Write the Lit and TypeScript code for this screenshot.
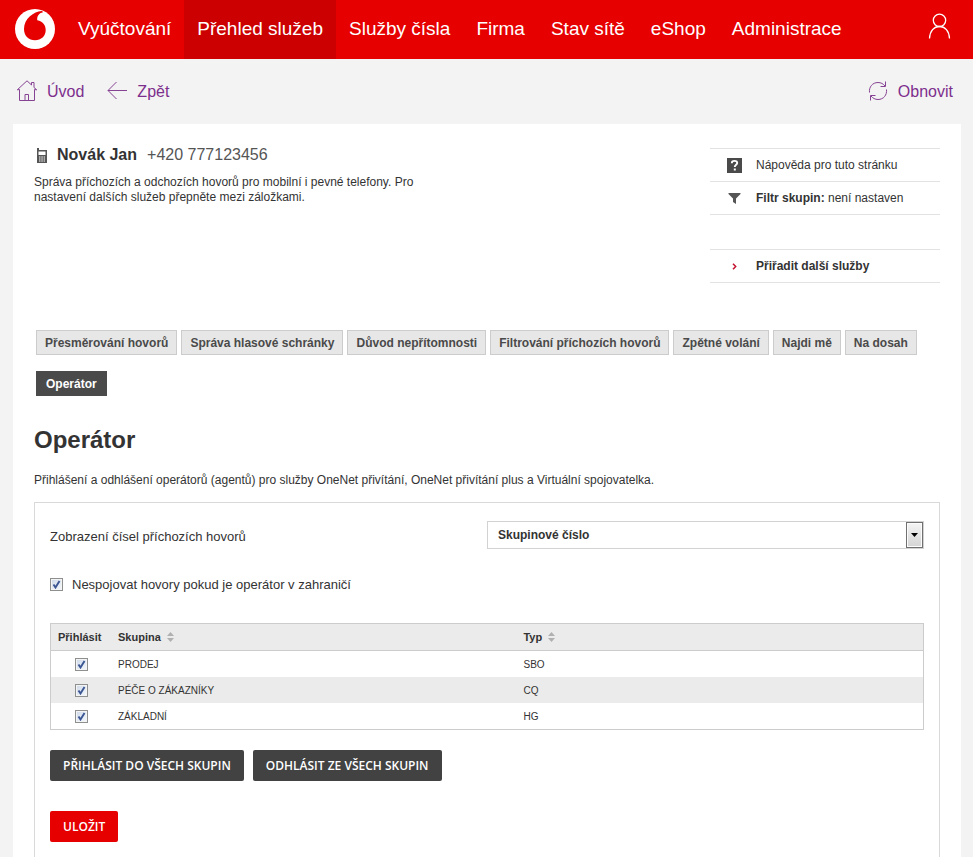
import { LitElement, html, css } from "lit";
import { customElement, state } from "lit/decorators.js";
import { classMap } from "lit/directives/class-map.js";

interface Group {
  name: string;
  type: string;
  signedIn: boolean;
}

const NAV = ["Vyúčtování", "Přehled služeb", "Služby čísla", "Firma", "Stav sítě", "eShop", "Administrace"];

const TABS = [
  "Přesměrování hovorů",
  "Správa hlasové schránky",
  "Důvod nepřítomnosti",
  "Filtrování příchozích hovorů",
  "Zpětné volání",
  "Najdi mě",
  "Na dosah",
  "Operátor",
];

const logo = html`<svg width="40" height="40" viewBox="0 0 40 40" aria-hidden="true">
  <circle cx="20" cy="20" r="20" fill="#fff" />
  <path
    d="M26.500 2C19 2.500 9 9.500 9 20c0 7 4.800 11.300 11 11.300C26.200 31.300 30.700 27 30.700 21.300c0-5.300-3-8.800-8.400-10C21.800 7.500 23.600 4 28 3.200c-.3-.7-.8-1.100-1.500-1.200z"
    fill="#e60000"
  />
</svg>`;

const userIcon = html`<svg width="24" height="26" viewBox="0 0 24 26" fill="none" stroke="#fff" stroke-width="1.300" aria-hidden="true">
  <circle cx="12.500" cy="7.300" r="6.200" />
  <path d="M2.500 25.500c.4-7.500 4.500-12 10-12s9.600 4.500 10 12" />
</svg>`;

const homeIcon = html`<svg width="20" height="21" viewBox="0 0 20 21" fill="none" stroke="#864393" stroke-width="1" aria-hidden="true">
  <path d="M.3 9.800L2.500 9.500v11h15v-11l2.200.3M.3 9.800L10 .8l4.500 4.200V2.500h2.500v5l2.700 2.300M8 20.500v-6h3.500v6" />
</svg>`;

const backIcon = html`<svg width="20" height="19" viewBox="0 0 20 19" fill="none" stroke="#864393" stroke-width="1" aria-hidden="true">
  <path d="M20 9.500H1M9.500 1L1 9.500 9.500 18" />
</svg>`;

const refreshIcon = html`<svg width="20" height="20" viewBox="0 0 20 20" fill="none" stroke="#864393" stroke-width="1" aria-hidden="true">
  <path d="M1.500 11.500C.8 6 4.500 1.500 10 1.500c2.800 0 5.300 1.300 7 3.500M17.500.5V5.500h-5M18.500 8.500c.7 5.500-3 10-8.500 10-2.800 0-5.300-1.300-7-3.500M2.500 19.500v-5h5" />
</svg>`;

const phoneIcon = html`<svg width="10" height="15" viewBox="0 0 10 15" aria-hidden="true">
  <path d="M0 0h2v2h8v13H0z" fill="#555" />
  <path d="M1.500 3.500h7V7h-7z" fill="#fff" />
  <path d="M2 8.500h1.500v1H2zm2.300 0h1.500v1H4.300zm2.300 0H8v1H6.600zM2 10.500h1.500v1H2zm2.300 0h1.500v1H4.300zm2.300 0H8v1H6.600zM2 12.500h1.500v1H2zm2.300 0h1.500v1H4.300zm2.300 0H8v1H6.600z" fill="#fff" />
</svg>`;

const filterIcon = html`<svg width="13" height="11" viewBox="0 0 12 11" aria-hidden="true">
  <path d="M0 0h12v1L7.500 5.500V11L4.500 9V5.500L0 1z" fill="#555" />
</svg>`;

const helpIcon = html`<svg width="15" height="15" viewBox="0 0 15 15" aria-hidden="true">
  <path d="M0 0h15v15H0z" fill="#4a4a4a" />
  <path d="M4.800 5.200C4.800 3.500 6 2.900 7.500 2.900s2.700.7 2.700 2.100c0 1.800-2.400 1.800-2.400 4" fill="none" stroke="#fff" stroke-width="1.900" />
  <path d="M6.800 10.500h2v2h-2z" fill="#fff" />
</svg>`;

const arrowIcon = html`<svg width="5" height="7" viewBox="0 0 5 7" fill="none" stroke="#c4122f" stroke-width="1.500" aria-hidden="true">
  <path d="M1 .7l2.700 2.800L1 6.300" />
</svg>`;

const sortIcon = html`<svg width="7" height="10" viewBox="0 0 7 10" aria-hidden="true">
  <path d="M3.500 0L7 4H0zM0 6h7l-3.500 4z" fill="#b0b0b0" />
</svg>`;

@customElement("app-root")
export class AppRoot extends LitElement {
  @state() private groups: Group[] = [
    { name: "PRODEJ", type: "SBO", signedIn: true },
    { name: "PÉČE O ZÁKAZNÍKY", type: "CQ", signedIn: true },
    { name: "ZÁKLADNÍ", type: "HG", signedIn: true },
  ];

  static styles = css`
    :host {
      display: block;
      min-height: 100vh;
      background: #f3f3f3;
      color: #333;
      font: 12px/15px "Liberation Sans", Arial, sans-serif;
    }
    * {
      box-sizing: border-box;
    }
    svg {
      display: block;
      flex: none;
    }
    a {
      color: inherit;
      text-decoration: none;
    }
    h1,
    h2,
    p {
      margin: 0;
    }
    .header {
      display: flex;
      align-items: center;
      height: 59px;
      padding: 0 22px 0 15px;
      background: #e60000;
      color: #fff;
    }
    .logo {
      margin-bottom: 2px;
    }
    .nav {
      display: flex;
      flex: 1;
      align-self: stretch;
      margin-left: 10px;
      font-size: 19px;
      line-height: 58px;
      white-space: nowrap;
    }
    .nav-link {
      padding: 0 13px;
    }
    .nav-link.current {
      background: #cc0000;
    }
    .user {
      margin-bottom: 8px;
    }
    .toolbar {
      display: flex;
      align-items: center;
      gap: 23px;
      height: 65px;
      padding: 0 20px 0 17px;
      color: #7d2f8d;
      font-size: 16px;
      line-height: 20px;
    }
    .tool {
      display: flex;
      align-items: center;
      gap: 10px;
    }
    .tool svg {
      margin-bottom: 2px;
    }
    .tool.last {
      margin-left: auto;
    }
    .panel {
      margin: 0 12px 0 13px;
      padding: 21px;
      background: #fff;
    }
    .intro {
      display: flex;
      justify-content: space-between;
    }
    .about {
      width: 400px;
    }
    .person {
      display: flex;
      align-items: center;
      gap: 10px;
      margin-bottom: 10px;
      padding-left: 3px;
      font-size: 16px;
      line-height: 20px;
    }
    .person-name {
      font-size: 16px;
      font-weight: bold;
    }
    .phone {
      color: #555;
    }
    .side {
      width: 230px;
      margin-top: 3px;
    }
    .side-group {
      border-bottom: 1px solid #e2e2e2;
    }
    .side-group + .side-group {
      margin-top: 34px;
    }
    .side-link {
      display: flex;
      align-items: center;
      height: 33px;
      padding-top: 1px;
      border-top: 1px solid #e2e2e2;
    }
    .side-icon {
      display: flex;
      justify-content: center;
      width: 46px;
      padding-left: 2px;
    }
    .tabs {
      display: flex;
      flex-wrap: wrap;
      gap: 16px 4px;
      margin: 47px 0 30px 2px;
    }
    .tab {
      height: 25px;
      padding: 2px 8px 0;
      border: 1px solid #ccc;
      background: #e7e7e7;
      color: #4a4a4a;
      font: bold 12px/21px "Liberation Sans", Arial, sans-serif;
    }
    .tab.current {
      padding: 2px 9px 0;
      border-color: #4a4a4a;
      background: #4a4a4a;
      color: #fff;
    }
    .title {
      margin-bottom: 19px;
      font-size: 24px;
      line-height: 28px;
    }
    .box {
      margin-top: 14px;
      padding: 18px 15px 40px;
      border: 1px solid #d9d9d9;
    }
    .field {
      display: grid;
      grid-template-columns: 1fr 1fr;
      align-items: center;
      font-size: 13px;
    }
    .field label {
      padding-top: 2px;
    }
    .select-wrap {
      position: relative;
    }
    .select {
      display: block;
      width: 100%;
      height: 28px;
      padding: 0 10px;
      border: 1px solid #d2d2d2;
      border-radius: 0;
      appearance: none;
      background: #fff;
      color: #333;
      font: bold 12px/15px "Liberation Sans", Arial, sans-serif;
    }
    .select-arrow {
      position: absolute;
      top: 1px;
      right: 1px;
      bottom: 1px;
      display: flex;
      align-items: center;
      justify-content: center;
      width: 17px;
      border: 1px solid #707070;
      background: linear-gradient(#f4f4f4, #d4d4d4);
      box-shadow: inset 0 0 0 1px #fcfcfc;
      pointer-events: none;
    }
    .check {
      display: flex;
      align-items: center;
      gap: 9px;
      margin: 28px 0 31px;
      font-size: 13px;
    }
    .checkbox {
      display: block;
      flex: none;
      width: 13px;
      height: 13px;
      margin: 0;
      border: 1px solid #8e8f8f;
      appearance: none;
      background: linear-gradient(135deg, #cdd8e8, #f6f9fd);
      box-shadow: inset 0 0 0 1px #f4f4f4;
    }
    .checkbox:checked {
      background:
        url("data:image/svg+xml,%3Csvg xmlns='http://www.w3.org/2000/svg' viewBox='0 0 11 11'%3E%3Cpath d='M2.500 5.500l2 3L8.500 2' fill='none' stroke='%233b5692' stroke-width='1.900'/%3E%3C/svg%3E")
          center / 11px 11px no-repeat,
        linear-gradient(135deg, #cdd8e8, #f6f9fd);
    }
    .groups {
      width: 100%;
      border: 1px solid #ccc;
      border-spacing: 0;
      table-layout: fixed;
      font-size: 10px;
      text-align: left;
    }
    .groups th {
      height: 27px;
      padding: 0 7px;
      border-bottom: 1px solid #ccc;
      background: #ebebeb;
      font-size: 11px;
    }
    .groups td {
      height: 26px;
      padding: 0 7px;
    }
    .groups tbody tr:nth-child(even) {
      background: #ebebeb;
    }
    .col-check {
      width: 60px;
    }
    .col-name {
      width: 46.5%;
    }
    .groups .checkbox {
      margin: 0 auto;
    }
    .sort {
      display: flex;
      align-items: center;
      gap: 6px;
      padding: 0;
      border: 0;
      background: none;
      color: inherit;
      font: inherit;
    }
    .actions {
      display: flex;
      gap: 9px;
      margin: 20px 0 30px;
    }
    .button {
      height: 31px;
      padding: 0 13px;
      border: 0;
      border-radius: 2px;
      background: #424242;
      color: #fff;
      font: 600 12px/31px "Open Sans", "Noto Sans", sans-serif;
      text-transform: uppercase;
      white-space: nowrap;
    }
    .button.primary {
      background: #e60000;
    }
  `;

  private setAll(signedIn: boolean) {
    this.groups = this.groups.map((g) => ({ ...g, signedIn }));
  }

  private toggle(index: number, e: Event) {
    const signedIn = (e.target as HTMLInputElement).checked;
    this.groups = this.groups.map((g, i) => (i === index ? { ...g, signedIn } : g));
  }

  render() {
    return html`
      <header class="header">
        <a class="logo" href="#" aria-label="Vodafone">${logo}</a>
        <nav class="nav">
          ${NAV.map((n, i) => html`<a href="#" class=${classMap({ "nav-link": true, current: i === 1 })}>${n}</a>`)}
        </nav>
        <a class="user" href="#" aria-label="Uživatel">${userIcon}</a>
      </header>

      <div class="toolbar">
        <a class="tool" href="#">${homeIcon}<span>Úvod</span></a>
        <a class="tool" href="#">${backIcon}<span>Zpět</span></a>
        <a class="tool last" href="#">${refreshIcon}<span>Obnovit</span></a>
      </div>

      <main class="panel">
        <section class="intro">
          <div class="about">
            <div class="person">
              ${phoneIcon}
              <h1 class="person-name">Novák Jan</h1>
              <span class="phone">+420 777123456</span>
            </div>
            <p>
              Správa příchozích a odchozích hovorů pro mobilní i pevné telefony. Pro nastavení dalších služeb přepněte
              mezi záložkami.
            </p>
          </div>
          <aside class="side">
            <div class="side-group">
              <a class="side-link" href="#"><span class="side-icon">${helpIcon}</span><span>Nápověda pro tuto stránku</span></a>
              <a class="side-link" href="#"><span class="side-icon">${filterIcon}</span><span><b>Filtr skupin:</b> není nastaven</span></a>
            </div>
            <div class="side-group">
              <a class="side-link" href="#"><span class="side-icon">${arrowIcon}</span><b>Přiřadit další služby</b></a>
            </div>
          </aside>
        </section>

        <div class="tabs">
          ${TABS.map(
            (t) => html`<button type="button" class=${classMap({ tab: true, current: t === "Operátor" })}>${t}</button>`
          )}
        </div>

        <h2 class="title">Operátor</h2>
        <p>Přihlášení a odhlášení operátorů (agentů) pro služby OneNet přivítání, OneNet přivítání plus a Virtuální spojovatelka.</p>

        <form class="box" @submit=${(e: Event) => e.preventDefault()}>
          <div class="field">
            <label for="display">Zobrazení čísel příchozích hovorů</label>
            <div class="select-wrap">
              <select id="display" class="select">
                <option>Skupinové číslo</option>
              </select>
              <span class="select-arrow">
                <svg width="7" height="4" viewBox="0 0 7 4" aria-hidden="true"><path d="M0 0h7L3.500 4z" fill="#000" /></svg>
              </span>
            </div>
          </div>

          <label class="check"><input class="checkbox" type="checkbox" checked /><span>Nespojovat hovory pokud je operátor v zahraničí</span></label>

          <table class="groups">
            <thead>
              <tr>
                <th class="col-check">Přihlásit</th>
                <th class="col-name"><button type="button" class="sort">Skupina ${sortIcon}</button></th>
                <th><button type="button" class="sort">Typ ${sortIcon}</button></th>
              </tr>
            </thead>
            <tbody>
              ${this.groups.map(
                (g, i) => html`<tr>
                  <td>
                    <input
                      class="checkbox"
                      type="checkbox"
                      aria-label=${`Přihlásit ${g.name}`}
                      .checked=${g.signedIn}
                      @change=${(e: Event) => this.toggle(i, e)}
                    />
                  </td>
                  <td>${g.name}</td>
                  <td>${g.type}</td>
                </tr>`
              )}
            </tbody>
          </table>

          <div class="actions">
            <button type="button" class="button" @click=${() => this.setAll(true)}>Přihlásit do všech skupin</button>
            <button type="button" class="button" @click=${() => this.setAll(false)}>Odhlásit ze všech skupin</button>
          </div>
          <button type="submit" class="button primary">Uložit</button>
        </form>
      </main>
    `;
  }
}
